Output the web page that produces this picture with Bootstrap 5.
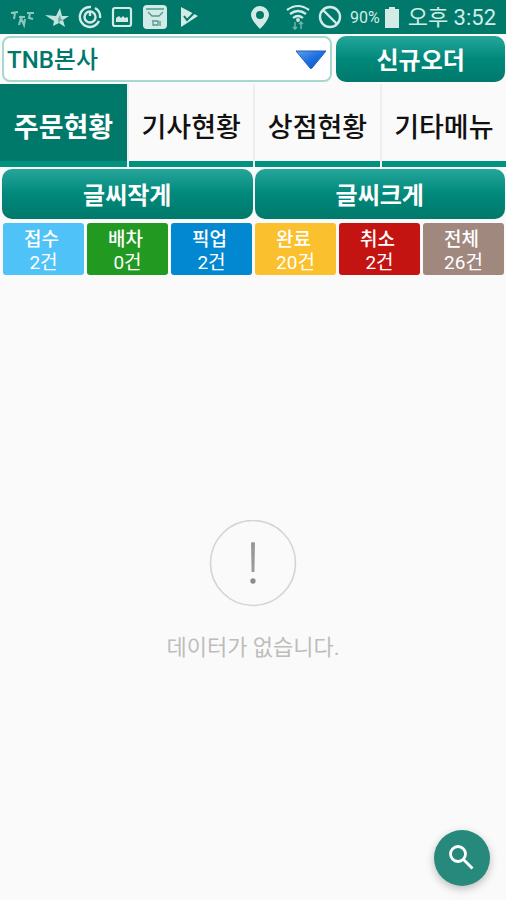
<!DOCTYPE html>
<html lang="ko">
<head>
<meta charset="utf-8">
<meta name="viewport" content="width=device-width, initial-scale=1">
<title>주문현황</title>
<link href="https://cdn.jsdelivr.net/npm/bootstrap@5.3.0/dist/css/bootstrap.min.css" rel="stylesheet">
<style>
body{background:#fafafa;font-family:Roboto,"Noto Sans CJK KR",sans-serif}
.statusbar{background:#00796b;color:#d3ebe7;height:34px;padding:0 10px}
.statusbar svg{flex:none}
.clock{font-size:22px;line-height:32px;padding-top:2px}
.battery{font-size:16px;line-height:32px;padding-top:2px}
.topbar{padding:2px 1px 2px 2px;gap:4px}
.branch{flex:331 1 0;min-width:0}
.branch select{height:46px;padding:2px 40px 0 3px;border:2px solid #a5d8cf;border-radius:8px;background:#fff;color:#00796b;font-size:24px;line-height:28px;font-weight:500;font-family:Roboto,"Noto Sans CJK KR",sans-serif}
.branch svg{right:5px;top:14px;pointer-events:none}
.btn-teal,.btn-teal:hover{border:0;border-radius:10px;color:#fff;background:linear-gradient(#26a69a,#00897b 50%,#00796b);font-size:24px;line-height:30px;font-weight:700;padding:10px 0 6px}
.neworder{flex:169 1 0}
.tabs{gap:2px}
.tab-item{height:83px;border:0;border-bottom:6px solid #00917f;background:#fafafa;color:#111;font-size:27px;line-height:36px;font-weight:500;padding:10px 0 0}
.tab-item.active{background:#00796b;color:#fff;font-weight:700;min-width:127px}
.tabline{background:#eee}
.sizes{padding:2px 1px 0 2px;gap:2px}
.sizes .btn-teal{padding:12px 0 8px}
.tiles{padding:4px 2px 0 3px;gap:3px}
.tile{border:0;border-radius:3px;color:#fff;font-size:19px;line-height:23px;font-weight:500;padding:5px 0 1px;text-align:center}
.tile .state{padding-right:4px}
.tile .count{font-weight:400}
.c-new{background:#4fc3f7}.c-assign{background:#229a22}.c-pick{background:#0288d1}
.c-done{background:#fbc02d}.c-cancel{background:#c41411}.c-all{background:#a1887f}
.empty-text{font-size:22px;line-height:32px;font-weight:400;color:#bdbdbd;margin-top:24px}
.fab{right:16px;bottom:14px;width:56px;height:56px;border:0;background:#26897b;box-shadow:0 3px 8px rgba(0,0,0,.25)}
</style>
</head>
<body>
<div class="d-flex flex-column min-vh-100">
  <div class="statusbar d-flex align-items-center justify-content-between">
    <div class="d-flex align-items-center">
      <svg width="26" height="24" viewBox="0 0 26 24" fill="none" stroke="#8cc7bd" stroke-width="2"><path d="M1 8l7-1M5 8l-1 6M9 20l2-7 3 7 1-6M17 8h7M20 8l-1 5 4 1M9 12h6"/></svg>
      <svg class="ms-2" width="26" height="24" viewBox="0 0 26 24" fill="#c3e3de"><path d="M1 10l11 1 4-8 2 8h7l-6 4 2 7-6-4-6 3 1-5z"/><path d="M14 14l2-4 1 4 3 1-4 1-1 3z" fill="#66aaa0"/></svg>
      <svg class="ms-2" width="24" height="24" viewBox="0 0 24 24" fill="none" stroke="#d3ebe7" stroke-width="2.4"><path d="M13 2a10 10 0 1 0 8 14M17 3a10 10 0 0 1 5 10"/><circle cx="12" cy="12" r="5.5"/><path d="M12 7v4"/></svg>
      <svg class="ms-2 me-2" width="24" height="24" viewBox="0 0 24 24"><rect x="3" y="3" width="18" height="18" rx="2" fill="none" stroke="#d3ebe7" stroke-width="2.2"/><path d="M6 17v-4l3-2 2 2 2-2 2 2 2-1 1 1v4z" fill="#d3ebe7"/></svg>
      <svg width="26" height="26" viewBox="0 0 26 26"><rect x="1" y="1" width="24" height="24" rx="4" fill="#d3ebe7"/><g fill="none" stroke="#51998f" stroke-width="1.3"><path d="M4 5h18M6 8l4 4h7l4-4M10 17h6v4h-5v-3M18 17v5"/></g></svg>
      <svg class="ms-2" width="24" height="24" viewBox="0 0 24 24"><path d="M5 2l17 9-17 11z" fill="#d3ebe7"/><path d="M8 11l3 4 9-9" fill="none" stroke="#00796b" stroke-width="2"/></svg>
    </div>
    <div class="d-flex align-items-center">
      <svg width="20" height="24" viewBox="0 0 20 24"><path fill="#d3ebe7" fill-rule="evenodd" d="M10 1a9 9 0 0 0-9 9c0 5 9 14 9 14s9-9 9-14a9 9 0 0 0-9-9zm0 5a4 4 0 1 1 0 8 4 4 0 0 1 0-8z"/></svg>
      <svg class="ms-3" width="24" height="26" viewBox="0 0 24 26" fill="none" stroke="#d3ebe7" stroke-width="2.2"><path d="M1 6Q12-2 23 6M4 10q8-6 16 0M7 14q5-4 10 0"/><circle cx="12" cy="16" r=".8"/><path d="M9 18v7M7 23l2 2 2-2M15 25v-7M13 20l2-2 2 2" stroke="#6fb3a9" stroke-width="1.5"/></svg>
      <svg class="ms-2 me-2" width="24" height="24" viewBox="0 0 24 24" fill="none" stroke="#d3ebe7" stroke-width="2.4"><circle cx="12" cy="12" r="10"/><path d="M5 5l14 14"/></svg>
      <span class="battery">90%</span>
      <svg class="ms-1 me-2" width="16" height="22" viewBox="0 0 16 22"><path d="M5 1h6v2h4v19H1V3h4z" fill="#d3ebe7"/></svg>
      <span class="clock">오후 3:52</span>
    </div>
  </div>

  <div class="topbar d-flex">
    <div class="branch position-relative">
      <select class="form-select" aria-label="지사 선택"><option>TNB본사</option></select>
      <svg class="position-absolute" width="32" height="20" viewBox="0 0 32 20" aria-hidden="true"><defs><linearGradient id="arrow" x1="0" y1="0" x2="1" y2="1"><stop offset="0" stop-color="#5fa0ee"/><stop offset=".5" stop-color="#1c6fe0"/><stop offset="1" stop-color="#1450b8"/></linearGradient></defs><path d="M1 1h30L17 18q-1 1-2 0z" fill="url(#arrow)" stroke="#1e5fc4"/></svg>
    </div>
    <button type="button" class="btn btn-teal neworder">신규오더</button>
  </div>

  <nav class="tabs tabline d-flex">
    <button type="button" class="tab-item active col" aria-current="page">주문현황</button>
    <button type="button" class="tab-item col">기사현황</button>
    <button type="button" class="tab-item col">상점현황</button>
    <button type="button" class="tab-item col">기타메뉴</button>
  </nav>

  <div class="sizes d-flex">
    <button type="button" class="btn btn-teal w-50">글씨작게</button>
    <button type="button" class="btn btn-teal w-50">글씨크게</button>
  </div>

  <div class="tiles d-flex">
    <button type="button" class="tile c-new w-100"><span class="state d-block">접수</span><span class="count">2건</span></button>
    <button type="button" class="tile c-assign w-100"><span class="state d-block">배차</span><span class="count">0건</span></button>
    <button type="button" class="tile c-pick w-100"><span class="state d-block">픽업</span><span class="count">2건</span></button>
    <button type="button" class="tile c-done w-100"><span class="state d-block">완료</span><span class="count">20건</span></button>
    <button type="button" class="tile c-cancel w-100"><span class="state d-block">취소</span><span class="count">2건</span></button>
    <button type="button" class="tile c-all w-100"><span class="state d-block">전체</span><span class="count">26건</span></button>
  </div>

  <main class="flex-grow-1 d-flex flex-column align-items-center justify-content-center pt-2">
    <svg width="88" height="88" viewBox="0 0 88 88" aria-hidden="true"><circle cx="44" cy="43" r="42.500" fill="none" stroke="#d4d4d4" stroke-width="1.600"/><path d="M42 23q2-2 4 0l-.6 29h-2.800z" fill="#999"/><circle cx="44" cy="61" r="2.700" fill="#8c8c8c"/></svg>
    <p class="empty-text mb-0">데이터가 없습니다.</p>
  </main>
</div>
<button type="button" class="fab position-fixed rounded-circle d-flex align-items-center justify-content-center" aria-label="검색">
  <svg width="28" height="28" viewBox="0 0 28 28" fill="none" stroke="#fff" stroke-width="2.8"><circle cx="10" cy="10" r="7.5"/><path d="M15.500 15.500l9 9"/></svg>
</button>
<script src="https://cdn.jsdelivr.net/npm/bootstrap@5.3.0/dist/js/bootstrap.bundle.min.js"></script>
</body>
</html>
